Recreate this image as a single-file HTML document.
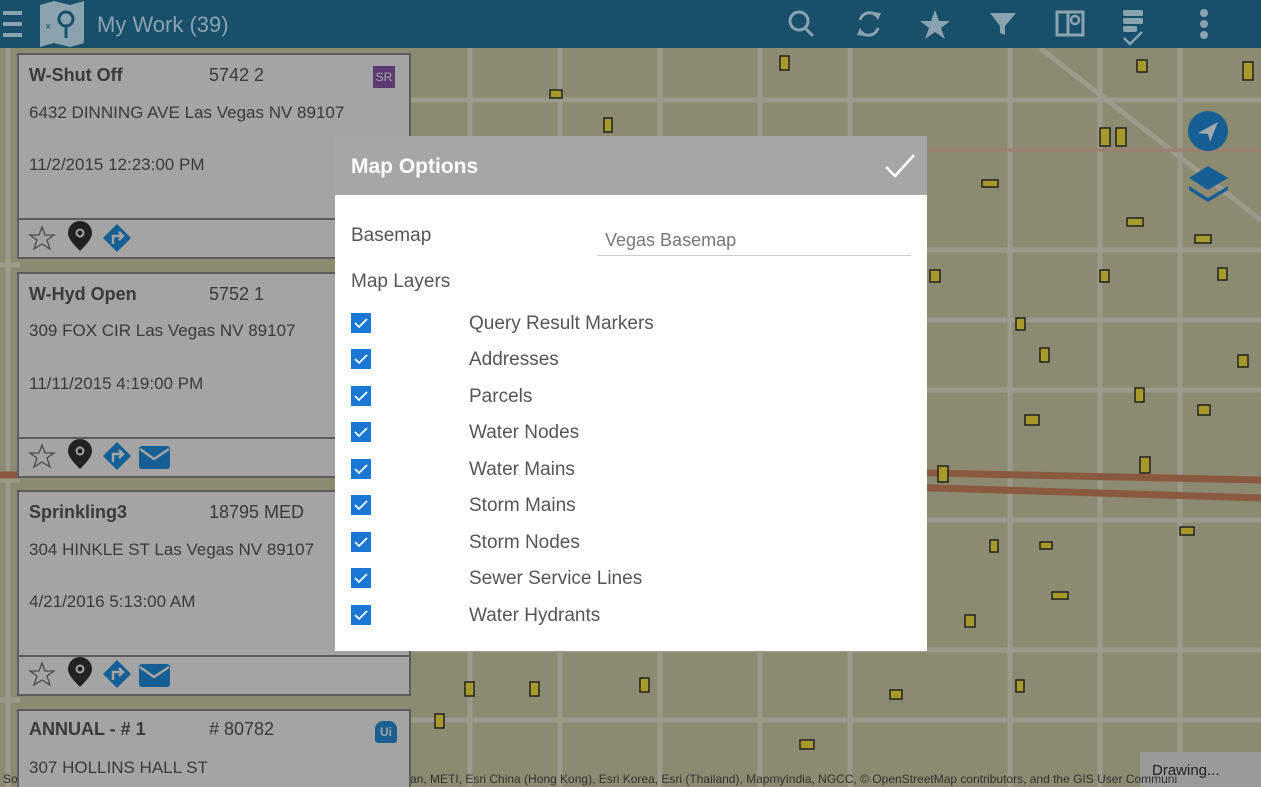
<!DOCTYPE html>
<html><head><meta charset="utf-8"><style>
*{margin:0;padding:0;box-sizing:border-box}
html,body{width:1261px;height:787px;overflow:hidden}
body{position:relative;background:#8c8a70;font-family:"Segoe UI","Liberation Sans",sans-serif;}
.top{position:absolute;left:0;top:0;width:1261px;height:48px;background:#18506b;}
.top .t{position:absolute;left:97px;top:12px;font-size:22px;color:#8aa3ae;}
.card{position:absolute;left:17px;width:394px;background:#a4a4a4;border:2px solid #5c5c5c;color:#3a3a3a;overflow:hidden}
.card .b{position:absolute;left:10px;font-size:18px;}
.foot{position:absolute;left:17px;width:394px;height:41px;background:#a4a4a4;border:2px solid #5c5c5c;}
.modal{position:absolute;left:335px;top:136px;width:592px;height:515px;background:#fff;}
.mh{height:59px;background:#a6a6a6;color:#fff;font-size:21px;font-weight:bold;padding:19px 16px;}
.lbl{position:absolute;font-size:19px;color:#555;}
.cb{position:absolute;left:16px;width:20px;height:20px;background:#1a78d4;}
.row{position:absolute;left:134px;font-size:19px;color:#555;}
</style></head><body>
<svg style="position:absolute;left:0;top:0" width="1261" height="787">
<g stroke="#9b9a8c" stroke-width="5" fill="none">
<path d="M410 100 H1261 M410 250 H1261 M410 320H1261 M410 390H1261 M410 520H1261 M410 650H1261 M410 720H1261"/>
<path d="M470 48V787 M560 48V787 M660 48V787 M760 48V787 M850 48V787 M1010 48V787 M1100 48V787 M1180 48V787 M1040 48 L1261 220"/>
<path d="M0 265H20 M0 480H20 M0 700H20 M8 48V787"/>
</g>
<path d="M410 150 L1261 150" stroke="#9a8070" stroke-width="3"/>
<path d="M410 462 L1261 480 M410 472 L1261 498" stroke="#8a5a40" stroke-width="7"/>
<path d="M0 475 L20 475" stroke="#8a5a40" stroke-width="7"/>
<g fill="#a89a2a" stroke="#222" stroke-width="1.5">
<rect x="1100" y="128" width="10" height="18"/><rect x="1116" y="128" width="10" height="18"/><rect x="1243" y="62" width="10" height="18"/>
<rect x="982" y="180" width="16" height="7"/><rect x="1127" y="218" width="16" height="8"/><rect x="1195" y="235" width="16" height="8"/>
<rect x="1016" y="318" width="9" height="12"/><rect x="1040" y="348" width="9" height="14"/><rect x="1135" y="388" width="9" height="14"/>
<rect x="1198" y="405" width="12" height="10"/><rect x="1025" y="415" width="14" height="10"/><rect x="1140" y="457" width="10" height="16"/>
<rect x="938" y="466" width="10" height="16"/><rect x="1180" y="527" width="14" height="8"/><rect x="990" y="540" width="8" height="12"/>
<rect x="1040" y="542" width="12" height="7"/><rect x="1052" y="592" width="16" height="7"/><rect x="1016" y="680" width="8" height="12"/>
<rect x="965" y="615" width="10" height="12"/><rect x="530" y="682" width="9" height="14"/><rect x="465" y="682" width="9" height="14"/>
<rect x="640" y="678" width="9" height="14"/><rect x="890" y="690" width="12" height="9"/><rect x="435" y="714" width="9" height="14"/>
<rect x="800" y="740" width="14" height="9"/><rect x="1100" y="270" width="9" height="12"/><rect x="1218" y="268" width="9" height="12"/>
<rect x="780" y="56" width="9" height="14"/><rect x="550" y="90" width="12" height="8"/><rect x="604" y="118" width="8" height="14"/>
<rect x="1137" y="60" width="10" height="12"/><rect x="1238" y="355" width="10" height="12"/><rect x="930" y="270" width="10" height="12"/>
</g>
<rect x="1140" y="752" width="121" height="35" fill="#9a9a9a"/>
<text x="1152" y="775" font-size="15" fill="#222" font-family="Liberation Sans">Drawing...</text>
<text x="410" y="783" font-size="12" fill="#333" font-family="Liberation Sans">an, METI, Esri China (Hong Kong), Esri Korea, Esri (Thailand), MapmyIndia, NGCC, © OpenStreetMap contributors, and the GIS User Communi</text>
<text x="3" y="783" font-size="12" fill="#333" font-family="Liberation Sans">So</text>
<circle cx="1208" cy="131" r="20" fill="#155f94"/>
<path d="M1198 133 L1218 122 L1210 142 L1208 134 Z" fill="#a0a8b0"/>
<g fill="#155f94"><path d="M1189 178 L1208 166 L1228 178 L1208 190Z"/><path d="M1189 186 L1208 198 L1228 186 L1228 190 L1208 202 L1189 190Z"/></g>
</svg>
<div class="top">
<svg style="position:absolute;left:0;top:0" width="1261" height="48">
<g fill="#8aa3ae"><rect x="3" y="11" width="19" height="4"/><rect x="3" y="22" width="19" height="4"/><rect x="3" y="33" width="19" height="4"/></g>
<path d="M40 5 L54 1 L70 5 L84 1 V43 L70 47 L54 43 L40 47Z" fill="#8aa3ae"/>
<circle cx="66" cy="19" r="7" fill="none" stroke="#18506b" stroke-width="3"/><path d="M66 26V38" stroke="#18506b" stroke-width="3"/>
<text x="45" y="30" font-size="11" fill="#18506b" font-family="Liberation Sans">×</text>
<g stroke="#8aa3ae" stroke-width="3" fill="none"><circle cx="799" cy="21" r="9"/><path d="M805 28 L813 36"/>
<path d="M860 20 A10 10 0 0 1 877 16 M878 28 A10 10 0 0 1 861 32"/>
<rect x="1057" y="12" width="26" height="23"/><path d="M1068 12V35"/>
<path d="M1124 38 L1130 44 L1142 32" stroke-width="2.5"/></g>
<path d="M873 12 L881 13 L878 20Z M865 36 L857 35 L860 28Z" fill="#8aa3ae"/>
<path d="M935 10 L939 21 L950 21 L941 28 L945 39 L935 32 L925 39 L929 28 L920 21 L931 21Z" fill="#8aa3ae"/>
<path d="M990 13 L1016 13 L1005 26 L1005 35 L1000 33 L1000 26Z" fill="#8aa3ae"/>
<circle cx="1075" cy="20" r="4" fill="none" stroke="#8aa3ae" stroke-width="2.5"/>
<g fill="#8aa3ae"><rect x="1123" y="10" width="20" height="6" rx="2"/><rect x="1123" y="18" width="20" height="6" rx="2"/><rect x="1123" y="26" width="14" height="6" rx="2"/>
<circle cx="1204" cy="13" r="4"/><circle cx="1204" cy="24" r="4"/><circle cx="1204" cy="35" r="4"/></g>
</svg>
<div class="t">My Work (39)</div></div>

<div class="card" style="top:53px;height:167px"><div class="b" style="top:10px;font-weight:bold">W-Shut Off</div><div class="b" style="left:190px;top:10px">5742 2</div>
<div style="position:absolute;left:354px;top:11px;width:22px;height:22px;background:#5a3a70;color:#aaa;font-size:12px;text-align:center;line-height:22px">SR</div>
<div class="b" style="top:48px;font-size:17px">6432 DINNING AVE Las Vegas NV 89107</div><div class="b" style="top:100px;font-size:17px">11/2/2015 12:23:00 PM</div></div>
<div class="foot" style="top:218px"></div>
<div class="card" style="top:272px;height:167px"><div class="b" style="top:10px;font-weight:bold">W-Hyd Open</div><div class="b" style="left:190px;top:10px">5752 1</div>
<div class="b" style="top:47px;font-size:17px">309 FOX CIR Las Vegas NV 89107</div><div class="b" style="top:100px;font-size:17px">11/11/2015 4:19:00 PM</div></div>
<div class="foot" style="top:437px"></div>
<div class="card" style="top:490px;height:167px"><div class="b" style="top:10px;font-weight:bold">Sprinkling3</div><div class="b" style="left:190px;top:10px">18795 MED</div>
<div class="b" style="top:48px;font-size:17px">304 HINKLE ST Las Vegas NV 89107</div><div class="b" style="top:100px;font-size:17px">4/21/2016 5:13:00 AM</div></div>
<div class="foot" style="top:655px"></div>
<div class="card" style="top:709px;height:80px"><div class="b" style="top:8px;font-weight:bold">ANNUAL - # 1</div><div class="b" style="left:190px;top:8px"># 80782</div>
<div style="position:absolute;left:356px;top:10px;width:22px;height:22px;background:#1a5f8e;border-radius:8px 8px 3px 3px;color:#a4a4a4;font-size:12px;text-align:center;line-height:22px;font-weight:bold">Ui</div>
<div class="b" style="top:47px;font-size:17px">307 HOLLINS HALL ST</div></div>

<svg style="position:absolute;left:0;top:0" width="420" height="787">
<g id="ic">
<path d="M42 227 L45 235 L54 235 L47 240 L50 249 L42 244 L34 249 L37 240 L30 235 L39 235Z" fill="none" stroke="#4a4a4a" stroke-width="1.3"/>
<path d="M80 251 C72 243 68 238 68 233 A12 12 0 0 1 92 233 C92 238 88 243 80 251Z" fill="#222"/><circle cx="80" cy="233" r="3.5" fill="none" stroke="#a4a4a4" stroke-width="2"/>
<path d="M117 224 L131 238 L117 252 L103 238Z" fill="#155f94"/><path d="M113 244 V236 H122 M119 232 L123 236 L119 240" stroke="#a4a4a4" stroke-width="2.5" fill="none"/>
</g>
<use href="#ic" y="218"/><use href="#ic" y="436"/>
<g id="env"><rect x="139" y="446" width="31" height="23" rx="3" fill="#155f94"/><path d="M140 449 L154 459 L169 449" stroke="#a4a4a4" stroke-width="2.5" fill="none"/></g>
<use href="#env" y="218"/>
</svg>

<div class="modal">
<div class="mh">Map Options</div>
<svg style="position:absolute;left:549px;top:17px" width="32" height="26"><path d="M2 14 L11 23 L30 2" stroke="#fff" stroke-width="2.5" fill="none"/></svg>
<div class="lbl" style="left:16px;top:89px">Basemap</div>
<div class="lbl" style="left:270px;top:94px;font-size:18px;color:#777">Vegas Basemap</div>
<div style="position:absolute;left:262px;top:119px;width:314px;height:1px;background:#ccc"></div>
<div class="lbl" style="left:16px;top:135px">Map Layers</div>
<div class="cb" style="top:177px"></div><div class="row" style="top:177px">Query Result Markers</div>
<div class="cb" style="top:213px"></div><div class="row" style="top:213px">Addresses</div>
<div class="cb" style="top:250px"></div><div class="row" style="top:250px">Parcels</div>
<div class="cb" style="top:286px"></div><div class="row" style="top:286px">Water Nodes</div>
<div class="cb" style="top:323px"></div><div class="row" style="top:323px">Water Mains</div>
<div class="cb" style="top:359px"></div><div class="row" style="top:359px">Storm Mains</div>
<div class="cb" style="top:396px"></div><div class="row" style="top:396px">Storm Nodes</div>
<div class="cb" style="top:432px"></div><div class="row" style="top:432px">Sewer Service Lines</div>
<div class="cb" style="top:469px"></div><div class="row" style="top:469px">Water Hydrants</div>
<svg style="position:absolute;left:16px;top:0" width="20" height="515"><g stroke="#fff" stroke-width="1.8" fill="none">
<path d="M4 187 L8 191 L16 183"/><path d="M4 223 L8 227 L16 219"/><path d="M4 260 L8 264 L16 256"/><path d="M4 296 L8 300 L16 292"/><path d="M4 333 L8 337 L16 329"/><path d="M4 369 L8 373 L16 365"/><path d="M4 406 L8 410 L16 402"/><path d="M4 442 L8 446 L16 438"/><path d="M4 479 L8 483 L16 475"/></g></svg>
</div>
</body></html>
